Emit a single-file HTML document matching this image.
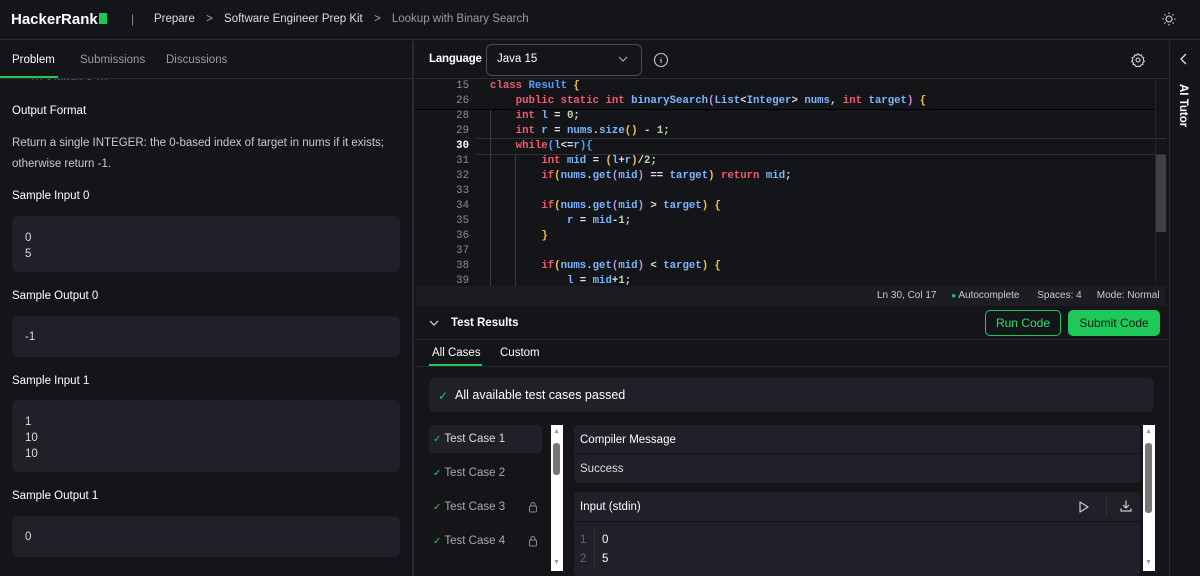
<!DOCTYPE html>
<html><head><meta charset="utf-8"><style>
*{margin:0;padding:0;box-sizing:border-box}
body{width:1200px;height:576px;background:#141519;font-family:"Liberation Sans",sans-serif;color:#e6e6e6;position:relative;overflow:hidden;font-size:12px}
.a{position:absolute;white-space:nowrap}
.box{position:absolute;background:#1f2028;border-radius:6px}
.code{font-family:"Liberation Mono",monospace;font-size:10.7px;font-weight:bold;line-height:15px}
.k{color:#f25a6e}.t{color:#4fa3ff}.b{color:#f0c43a}.i{color:#7cb6ff}.n{color:#b5d6a0}.p{color:#c98be0}.w{color:#ddd}
.ln{position:absolute;left:425px;width:44px;text-align:right;color:#8a8d96;font-family:"Liberation Mono",monospace;font-size:10.7px;line-height:15px}
</style></head><body>
<!-- header -->
<div class="a" style="left:0;top:0;width:1200px;height:40px;border-bottom:1px solid #2a2b31"></div>
<div class="a" style="left:11px;top:11px;font-size:15px;font-weight:bold;color:#fff">HackerRank<span style="display:inline-block;width:8px;height:11px;background:#1ec95a;margin-left:1px"></span></div>
<div class="a" style="left:131px;top:12px;color:#888;font-size:12px">|</div>
<div class="a" style="left:154px;top:13px;font-size:11.5px;color:#ddd">Prepare <span style="color:#aaa;margin:0 8px">&gt;</span> Software Engineer Prep Kit <span style="color:#aaa;margin:0 8px">&gt;</span> <span style="color:#9a9ca3">Lookup with Binary Search</span></div>
<svg class="a" style="left:1161px;top:11px" width="16" height="16" viewBox="0 0 16 16" fill="none" stroke="#ddd" stroke-width="1.1"><circle cx="8" cy="8" r="3"/><path d="M8 1.5v1.5M8 13v1.5M1.5 8H3M13 8h1.5M3.4 3.4l1 1M11.6 11.6l1 1M3.4 12.6l1-1M11.6 4.4l1-1"/></svg>
<!-- left panel -->
<div class="a" style="left:412px;top:41px;width:2px;height:535px;background:#2a2b31"></div>
<div class="a" style="left:30px;top:74px;font-size:11px;color:#777;height:6px;overflow:hidden;line-height:11px;padding-top:0">10 ≤ target ≤ 10</div>
<div class="a" style="left:0;top:41px;width:412px;height:37px;background:#141519"></div>
<div class="a" style="left:0;top:78px;width:412px;height:1px;background:#2a2b31"></div>
<div class="a" style="left:12px;top:54px;font-size:11.5px;color:#fff">Problem</div>
<div class="a" style="left:0;top:76px;width:58px;height:2px;background:#1ec95a"></div>
<div class="a" style="left:80px;top:54px;font-size:11.5px;color:#9a9ca3">Submissions</div>
<div class="a" style="left:166px;top:54px;font-size:11.5px;color:#9a9ca3">Discussions</div>
<div class="a" style="left:12px;top:105px;font-size:11.5px;color:#fff">Output Format</div>
<div class="a" style="left:12px;top:137px;font-size:11.5px;color:#c9cbd1">Return a single INTEGER: the 0-based index of target in nums if it exists;</div>
<div class="a" style="left:12px;top:158px;font-size:11.5px;color:#c9cbd1">otherwise return -1.</div>
<div class="a" style="left:12px;top:190px;font-size:11.5px;color:#fff">Sample Input 0</div>
<div class="box" style="left:12px;top:216px;width:388px;height:56px"></div>
<div class="a" style="left:25px;top:230px;font-size:11.5px;line-height:16px;color:#ddd">0<br>5</div>
<div class="a" style="left:12px;top:290px;font-size:11.5px;color:#fff">Sample Output 0</div>
<div class="box" style="left:12px;top:316px;width:388px;height:41px"></div>
<div class="a" style="left:25px;top:331px;font-size:11.5px;color:#ddd">-1</div>
<div class="a" style="left:12px;top:375px;font-size:11.5px;color:#fff">Sample Input 1</div>
<div class="box" style="left:12px;top:400px;width:388px;height:72px"></div>
<div class="a" style="left:25px;top:414px;font-size:11.5px;line-height:16px;color:#ddd">1<br>10<br>10</div>
<div class="a" style="left:12px;top:490px;font-size:11.5px;color:#fff">Sample Output 1</div>
<div class="box" style="left:12px;top:516px;width:388px;height:41px"></div>
<div class="a" style="left:25px;top:531px;font-size:11.5px;color:#ddd">0</div>
<!-- editor header -->
<div class="a" style="left:429px;top:53px;font-size:11.5px;font-weight:bold;color:#fff;letter-spacing:-0.2px">Language</div>
<div class="a" style="left:486px;top:44px;width:156px;height:32px;border:1px solid #4a4c55;border-radius:6px"></div>
<div class="a" style="left:497px;top:53px;font-size:11.5px;color:#fff">Java 15</div>
<svg class="a" style="left:617px;top:55px" width="12" height="8" viewBox="0 0 12 8" fill="none" stroke="#aaa" stroke-width="1.2"><path d="M2 2l4 4 4-4"/></svg>
<svg class="a" style="left:653px;top:52px" width="16" height="16" viewBox="0 0 16 16" fill="none" stroke="#ccc" stroke-width="1.1"><circle cx="8" cy="8" r="6.5"/><path d="M8 7v4M8 5v.5"/></svg>
<svg class="a" style="left:1130px;top:52px" width="16" height="16" viewBox="0 0 24 24" fill="none" stroke="#ddd" stroke-width="1.6"><circle cx="12" cy="12" r="3"/><path d="M12 2.5l2 2.3 3-.4.9 2.9 2.8 1.3-.9 2.9 1.7 2.5-2.4 1.8.1 3-3 .6-1.4 2.7-2.8-1-2.8 1-1.4-2.7-3-.6.1-3L2.5 14l1.7-2.5-.9-2.9 2.8-1.3.9-2.9 3 .4z"/></svg>
<div class="a" style="left:415px;top:78px;width:753px;height:1px;background:#2a2b31"></div>
<!-- right strip -->
<div class="a" style="left:1169px;top:41px;width:1px;height:535px;background:#2a2b31"></div>
<svg class="a" style="left:1179px;top:53px" width="10" height="12" viewBox="0 0 10 12" fill="none" stroke="#ddd" stroke-width="1.3"><path d="M7 1L2 6l5 5"/></svg>
<div class="a" style="left:1177px;top:84px;font-size:11.5px;font-weight:bold;color:#fff;writing-mode:vertical-rl">AI Tutor</div>
<!-- code -->
<div class="a" style="left:415px;top:109px;width:740px;height:1px;background:#000"></div>
<div class="a" style="left:476px;top:138px;width:690px;height:17px;border-top:1px solid #2e3038;border-bottom:1px solid #2e3038"></div>
<div class="a" style="left:1155px;top:155px;width:11px;height:77px;background:#3f4046"></div>
<div class="a" style="left:1155px;top:79px;width:1px;height:208px;background:#24252b"></div>
<div class="a" style="left:490px;top:110px;width:1px;height:177px;background:#3a3c44"></div>
<div class="a" style="left:515px;top:155px;width:1px;height:132px;background:#3a3c44"></div>
<div class="ln" style="top:79px">15<br>26<br>28<br>29<br><span style="color:#fff;font-weight:bold">30</span><br>31<br>32<br>33<br>34<br>35<br>36<br>37<br>38<br>39</div>
<div class="a code w" style="left:490px;top:79px;white-space:pre"><span class="k">class</span> <span class="t">Result</span> <span class="b">{</span>
    <span class="k">public static int</span> <span class="i">binarySearch</span><span class="p">(</span><span class="i">List</span>&lt;<span class="i">Integer</span>&gt; <span class="i">nums</span>, <span class="k">int</span> <span class="i">target</span><span class="p">)</span> <span class="b">{</span>
    <span class="k">int</span> <span class="i">l</span> = <span class="n">0</span>;
    <span class="k">int</span> <span class="i">r</span> = <span class="i">nums</span>.<span class="i">size</span><span class="b">()</span> - <span class="n">1</span>;
    <span class="k">while</span><span class="t">(</span><span class="i">l</span>&lt;=<span class="i">r</span><span class="t">){</span>
        <span class="k">int</span> <span class="i">mid</span> = <span class="b">(</span><span class="i">l</span>+<span class="i">r</span><span class="b">)</span>/<span class="n">2</span>;
        <span class="k">if</span><span class="b">(</span><span class="i">nums</span>.<span class="i">get</span><span class="p">(</span><span class="i">mid</span><span class="p">)</span> == <span class="i">target</span><span class="b">)</span> <span class="k">return</span> <span class="i">mid</span>;

        <span class="k">if</span><span class="b">(</span><span class="i">nums</span>.<span class="i">get</span><span class="p">(</span><span class="i">mid</span><span class="p">)</span> &gt; <span class="i">target</span><span class="b">) {</span>
            <span class="i">r</span> = <span class="i">mid</span>-<span class="n">1</span>;
        <span class="b">}</span>

        <span class="k">if</span><span class="b">(</span><span class="i">nums</span>.<span class="i">get</span><span class="p">(</span><span class="i">mid</span><span class="p">)</span> &lt; <span class="i">target</span><span class="b">) {</span>
            <span class="i">l</span> = <span class="i">mid</span>+<span class="n">1</span>;</div>
<!-- status bar -->
<div class="a" style="left:416px;top:286px;width:750px;height:20px;background:#1c1d23"></div>
<div class="a" style="left:877px;top:290px;font-size:10px;color:#c9cbd1">Ln 30, Col 17 <span style="color:#1ec95a;margin-left:12px;font-size:8px">●</span> Autocomplete <span style="margin-left:15px">Spaces: 4</span><span style="margin-left:15px">Mode: Normal</span></div>
<!-- test results -->
<svg class="a" style="left:429px;top:319px" width="10" height="8" viewBox="0 0 10 8" fill="none" stroke="#ddd" stroke-width="1.2"><path d="M1 2l4 4 4-4"/></svg>
<div class="a" style="left:451px;top:317px;font-size:11.5px;font-weight:bold;color:#fff">Test Results</div>
<div class="a" style="left:985px;top:310px;width:76px;height:26px;border:1px solid #1ec95a;border-radius:5px;color:#2ee06a;font-size:12px;text-align:center;line-height:24px">Run Code</div>
<div class="a" style="left:1068px;top:310px;width:92px;height:26px;background:#1ec95a;border-radius:5px;color:#0c1a10;font-size:12px;text-align:center;line-height:26px">Submit Code</div>
<div class="a" style="left:415px;top:339px;width:753px;height:1px;background:#25262c"></div>
<div class="a" style="left:432px;top:347px;font-size:11.5px;color:#fff">All Cases</div>
<div class="a" style="left:429px;top:364px;width:53px;height:2px;background:#1ec95a"></div>
<div class="a" style="left:500px;top:347px;font-size:11.5px;color:#fff">Custom</div>
<div class="a" style="left:415px;top:366px;width:753px;height:1px;background:#25262c"></div>
<div class="box" style="left:429px;top:378px;width:725px;height:34px"></div>
<div class="a" style="left:438px;top:389px;font-size:12px;color:#1ec95a">✓</div>
<div class="a" style="left:455px;top:388px;font-size:12.5px;color:#fff">All available test cases passed</div>
<!-- case list -->
<div class="box" style="left:429px;top:425px;width:113px;height:28px;border-radius:4px"></div>
<div class="a" style="left:433px;top:433px;font-size:11.5px;color:#ddd"><span style="color:#1ec95a;font-size:10px">✓</span> Test Case 1</div>
<div class="a" style="left:433px;top:467px;font-size:11.5px;color:#aaa"><span style="color:#1ec95a;font-size:10px">✓</span> Test Case 2</div>
<div class="a" style="left:433px;top:501px;font-size:11.5px;color:#aaa"><span style="color:#1ec95a;font-size:10px">✓</span> Test Case 3</div>
<div class="a" style="left:433px;top:535px;font-size:11.5px;color:#aaa"><span style="color:#1ec95a;font-size:10px">✓</span> Test Case 4</div>
<svg class="a" style="left:528px;top:501px" width="10" height="12" viewBox="0 0 10 12" fill="none" stroke="#888" stroke-width="1"><rect x="1.5" y="5" width="7" height="6" rx="1"/><path d="M3 5V3.5a2 2 0 014 0V5"/></svg>
<svg class="a" style="left:528px;top:535px" width="10" height="12" viewBox="0 0 10 12" fill="none" stroke="#888" stroke-width="1"><rect x="1.5" y="5" width="7" height="6" rx="1"/><path d="M3 5V3.5a2 2 0 014 0V5"/></svg>
<div class="a" style="left:551px;top:425px;width:12px;height:146px;background:#fff"></div>
<div class="a" style="left:553px;top:443px;width:7px;height:32px;background:#777;border-radius:3px"></div>
<div class="a" style="left:553px;top:428px;font-size:7px;color:#999">▲</div>
<div class="a" style="left:553px;top:559px;font-size:7px;color:#999">▼</div>
<div class="a" style="left:1143px;top:425px;width:12px;height:146px;background:#fff"></div>
<div class="a" style="left:1145px;top:443px;width:7px;height:70px;background:#777;border-radius:3px"></div>
<div class="a" style="left:1145px;top:428px;font-size:7px;color:#999">▲</div>
<div class="a" style="left:1145px;top:559px;font-size:7px;color:#999">▼</div>
<!-- detail -->
<div class="box" style="left:574px;top:425px;width:566px;height:58px;border-radius:4px"></div>
<div class="a" style="left:574px;top:453px;width:566px;height:1px;background:#141519"></div>
<div class="a" style="left:580px;top:434px;font-size:11.5px;color:#fff">Compiler Message</div>
<div class="a" style="left:580px;top:463px;font-size:11.5px;color:#ddd">Success</div>
<div class="box" style="left:574px;top:492px;width:566px;height:84px;border-radius:4px"></div>
<div class="a" style="left:574px;top:521px;width:566px;height:1px;background:#141519"></div>
<div class="a" style="left:580px;top:501px;font-size:11.5px;color:#fff">Input (stdin)</div>
<svg class="a" style="left:1078px;top:500px" width="12" height="14" viewBox="0 0 12 14" fill="none" stroke="#ccc" stroke-width="1.2"><path d="M2 2v10l8-5z" stroke-linejoin="round"/></svg>
<div class="a" style="left:1106px;top:498px;width:1px;height:18px;background:#333"></div>
<svg class="a" style="left:1119px;top:499px" width="14" height="14" viewBox="0 0 14 14" fill="none" stroke="#ccc" stroke-width="1.2"><path d="M7 1.5v7M4 6l3 3 3-3M2 9.5v2.5h10V9.5"/></svg>
<div class="a" style="left:580px;top:531px;font-size:11.5px;line-height:19px;color:#666">1<br>2</div>
<div class="a" style="left:594px;top:528px;width:1px;height:42px;background:#333"></div>
<div class="a" style="left:602px;top:531px;font-size:11.5px;line-height:19px;color:#fff">0<br>5</div>
</body></html>
